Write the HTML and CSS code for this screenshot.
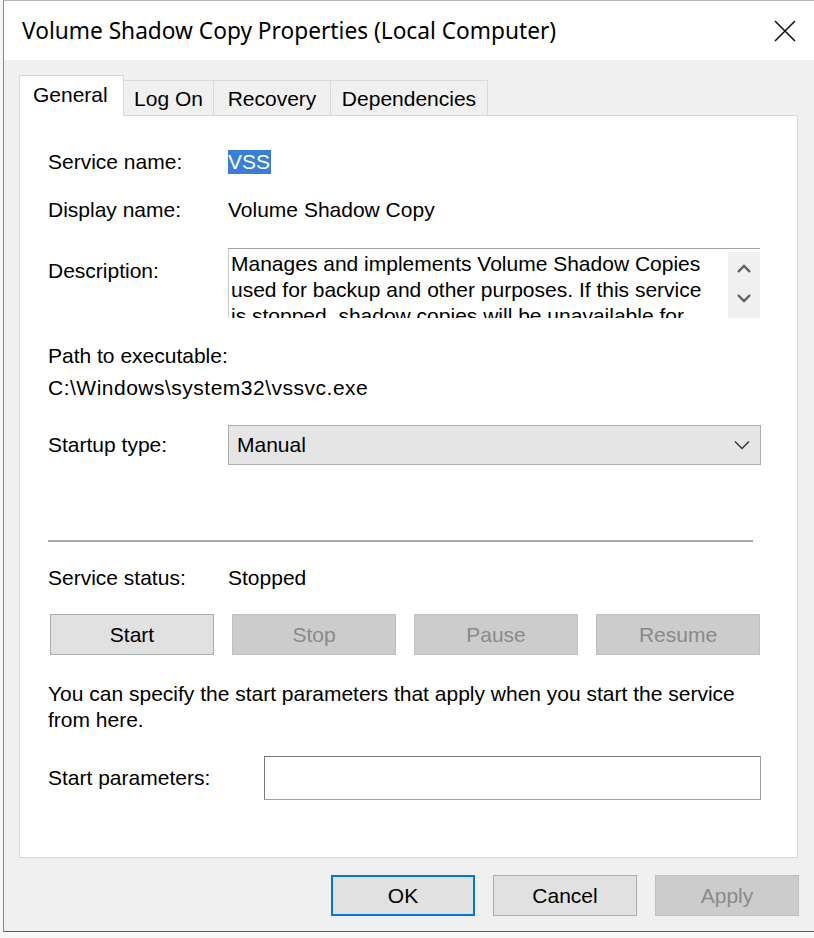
FILE: index.html
```
<!DOCTYPE html>
<html>
<head>
<meta charset="utf-8">
<link rel="stylesheet" href="styles.css">
</head>
<body>
<div class="window">
  <div class="titlebar">
    <span class="title">Volume Shadow Copy Properties (Local Computer)</span>
    <svg class="close" width="22" height="22" viewBox="0 0 22 22"><path d="M1 1 L21 21 M21 1 L1 21" stroke="#111" stroke-width="1.6" fill="none"/></svg>
  </div>
  <div class="client">
    <div class="tabs">
      <div class="tab active">General</div>
      <div class="tab">Log On</div>
      <div class="tab">Recovery</div>
      <div class="tab">Dependencies</div>
    </div>
    <div class="panel">
      <div class="row r1">
        <div class="label">Service name:</div>
        <div class="value"><span class="sel">VSS</span></div>
      </div>
      <div class="row r2">
        <div class="label">Display name:</div>
        <div class="value">Volume Shadow Copy</div>
      </div>
      <div class="row r3">
        <div class="label desc-label">Description:</div>
        <div class="descbox">
          <div class="desctext">Manages and implements Volume Shadow Copies used for backup and other purposes. If this service is stopped, shadow copies will be unavailable for backup and the backup may fail. If this service is disabled, any services that explicitly depend on it will fail to start.</div>
          <div class="scroll">
            <svg width="16" height="10" viewBox="0 0 16 10"><path d="M2 8 L8 2 L14 8" stroke="#606060" stroke-width="2.4" fill="none"/></svg>
            <svg width="16" height="10" viewBox="0 0 16 10"><path d="M2 2 L8 8 L14 2" stroke="#606060" stroke-width="2.4" fill="none"/></svg>
          </div>
        </div>
      </div>
      <div class="line pathlabel">Path to executable:</div>
      <div class="line pathvalue">C:\Windows\system32\vssvc.exe</div>
      <div class="row r4">
        <div class="label">Startup type:</div>
        <div class="combo">
          <span>Manual</span>
          <svg width="16" height="10" viewBox="0 0 16 10"><path d="M1 1.5 L8 8.5 L15 1.5" stroke="#333" stroke-width="1.4" fill="none"/></svg>
        </div>
      </div>
      <div class="separator"></div>
      <div class="row r5">
        <div class="label">Service status:</div>
        <div class="value">Stopped</div>
      </div>
      <div class="svcbuttons">
        <div class="btn">Start</div>
        <div class="btn disabled">Stop</div>
        <div class="btn disabled">Pause</div>
        <div class="btn disabled">Resume</div>
      </div>
      <p class="note">You can specify the start parameters that apply when you start the service from here.</p>
      <div class="row r6">
        <div class="label plabel">Start parameters:</div>
        <div class="input"></div>
      </div>
    </div>
    <div class="footer">
      <div class="btn dlg default">OK</div>
      <div class="btn dlg">Cancel</div>
      <div class="btn dlg disabled">Apply</div>
    </div>
  </div>
</div>
</body>
</html>
```
FILE: styles.css
```
html, body {
  margin: 0;
  padding: 0;
}
body {
  width: 814px;
  height: 938px;
  overflow: hidden;
  background: #f7f7f7;
  font-family: "Liberation Sans", Arial, sans-serif;
  font-size: 21px;
  color: #000;
}
.window {
  margin-left: 3px;
  width: 812px;
  height: 932px;
  box-sizing: border-box;
  border-left: 1px solid #8a8a8a;
  border-top: 1px solid #b4b4b4;
  border-bottom: 1px solid #5a5a5a;
  display: flex;
  flex-direction: column;
  background: #f0f0f0;
}
.titlebar {
  height: 59px;
  flex: none;
  background: #fff;
  display: flex;
  align-items: center;
  justify-content: space-between;
  padding: 0 19px 0 18px;
}
.title {
  font-family: "Noto Sans", "Open Sans", sans-serif;
  font-size: 22.7px;
  color: #000;
}
.close {
  display: block;
}
.client {
  flex: 1;
  padding: 15px 0 0 15px;
  display: flex;
  flex-direction: column;
}
.tabs {
  display: flex;
  align-items: flex-end;
  height: 40px;
  position: relative;
  z-index: 1;
}
.tab {
  height: 35px;
  box-sizing: border-box;
  border: 1px solid #d9d9d9;
  border-bottom: none;
  border-left: none;
  background: #f0f0f0;
  display: flex;
  align-items: center;
  line-height: 1;
}
.tab.active {
  width: 105px;
  height: 41px;
  margin-bottom: -1px;
  background: #fff;
  border-left: 1px solid #d9d9d9;
  padding: 8px 15px 0 13px;
  align-items: flex-start;
}
.tab:nth-child(2) { width: 90px; justify-content: center; }
.tab:nth-child(3) { width: 117px; justify-content: center; }
.tab:nth-child(4) { width: 157px; justify-content: center; }
.panel {
  width: 779px;
  height: 743px;
  box-sizing: border-box;
  border: 1px solid #d9d9d9;
  background: #fff;
  padding: 32px 0 0 28px;
}
.row {
  display: flex;
  align-items: center;
  height: 28px;
}
.label {
  width: 180px;
  flex: none;
}
.value {
  line-height: 28px;
}
.sel {
  display: inline-block;
  background: #3a7fd5;
  color: #fff;
  height: 24px;
  line-height: 24px;
  padding-right: 1px;
}
.r2 { margin-top: 20px; }
.r3 {
  margin-top: 24px;
  height: 70px;
  align-items: flex-start;
}
.desc-label {
  margin-top: 9px;
  line-height: 28px;
}
.descbox {
  width: 532px;
  height: 70px;
  box-sizing: border-box;
  border-top: 1px solid #a0a0a0;
  border-left: 1px solid #c8c8c8;
  display: flex;
  overflow: hidden;
}
.desctext {
  width: 483px;
  padding: 2px 0 0 2px;
  line-height: 26px;
  height: 67px;
  overflow: hidden;
}
.scroll {
  margin-left: auto;
  margin-top: 3px;
  width: 32px;
  background: #f0f0f0;
  display: flex;
  flex-direction: column;
  align-items: center;
  justify-content: space-around;
  padding: 2px 0 6px;
  box-sizing: border-box;
}
.scroll svg { display: block; }
.line {
  line-height: 28px;
  height: 28px;
}
.pathlabel { margin-top: 24px; }
.pathvalue {
  margin-top: 4px;
  letter-spacing: 0.5px;
}
.r4 {
  margin-top: 23px;
  height: 40px;
}
.combo {
  width: 533px;
  height: 40px;
  box-sizing: border-box;
  background: #e5e5e5;
  border: 1px solid #adadad;
  display: flex;
  align-items: center;
  justify-content: space-between;
  padding: 0 10px 0 8px;
}
.combo svg { display: block; }
.separator {
  margin-top: 75px;
  width: 705px;
  height: 2px;
  background: #a8a8a8;
}
.r5 { margin-top: 22px; }
.svcbuttons {
  margin-top: 22px;
  margin-left: 2px;
  width: 710px;
  display: grid;
  grid-template-columns: repeat(4, 1fr);
  gap: 18px;
}
.btn {
  height: 41px;
  box-sizing: border-box;
  background: #e1e1e1;
  border: 1px solid #adadad;
  display: flex;
  align-items: center;
  justify-content: center;
}
.btn.disabled {
  background: #cccccc;
  border-color: #bfbfbf;
  color: #8a8a8a;
}
.note {
  margin: 26px 0 0 0;
  width: 715px;
  line-height: 26px;
}
.r6 {
  margin-top: 23px;
  height: 44px;
}
.plabel { width: 216px; }
.input {
  width: 497px;
  height: 44px;
  box-sizing: border-box;
  border: 1px solid #7a7a7a;
  border-bottom-color: #a0a0a0;
  border-right-color: #a0a0a0;
  background: #fff;
}
.footer {
  margin-top: 17px;
  display: flex;
  justify-content: flex-end;
  gap: 18px;
  padding-right: 16px;
}
.btn.dlg {
  width: 144px;
}
.btn.default {
  border: 2px solid #0078d7;
}
```
